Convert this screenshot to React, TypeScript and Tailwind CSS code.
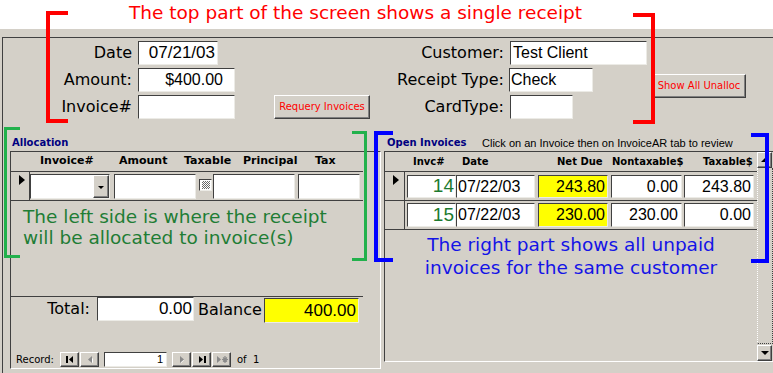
import React from "react";

const LABEL = "font-['DejaVu_Sans',sans-serif] text-[16px] leading-[20px] text-black whitespace-nowrap";
const VAL = "font-['Liberation_Sans',Arial,sans-serif] whitespace-nowrap";
const BOX =
  "flex items-center border border-t-[#404040] border-l-[#404040] border-r-[#ecebe6] border-b-[#ecebe6]";
const RAISED =
  "bg-[#d4d0c8] border border-t-white border-l-white border-r-[#404040] border-b-[#404040] shadow-[inset_-1px_-1px_0_#808080]";
const HEAD = "font-['DejaVu_Sans',sans-serif] font-bold whitespace-nowrap";
const NOTE = "font-['DejaVu_Sans',sans-serif] text-[18.5px] whitespace-nowrap";

function Bracket({ cls }: { cls: string }) {
  return <div className={`pointer-events-none absolute ${cls}`} />;
}

function RowArrow() {
  return <div className="h-0 w-0 border-y-[5px] border-l-[6px] border-y-transparent border-l-black" />;
}

function NavIcon({ kind }: { kind: "first" | "prev" | "next" | "last" | "new" }) {
  const on = "#000";
  const off = "#8a8a8a";
  return (
    <svg width="14" height="9" viewBox="0 0 14 9">
      {kind === "first" && (
        <>
          <rect x="3" y="1" width="2" height="7" fill={on} />
          <path d="M10 1 L6 4.5 L10 8 Z" fill={on} />
        </>
      )}
      {kind === "prev" && (
        <>
          <path d="M9 2 L6 4.5 L9 7 Z" fill="#fff" transform="translate(1 1)" />
          <path d="M9 1 L5 4.5 L9 8 Z" fill={off} />
        </>
      )}
      {kind === "next" && (
        <>
          <path d="M5 2 L8 4.5 L5 7 Z" fill="#fff" transform="translate(1 1)" />
          <path d="M5 1 L9 4.5 L5 8 Z" fill={off} />
        </>
      )}
      {kind === "last" && (
        <>
          <path d="M4 1 L8 4.5 L4 8 Z" fill={on} />
          <rect x="9" y="1" width="2" height="7" fill={on} />
        </>
      )}
      {kind === "new" && (
        <>
          <path d="M2 1 L6 4.5 L2 8 Z" fill={off} />
          <path d="M10 1 V8 M7 4.5 H13 M8 2.5 L12 6.5 M12 2.5 L8 6.5" stroke={off} strokeWidth="1.2" />
        </>
      )}
    </svg>
  );
}

function NavButton({ kind, cls = "" }: { kind: "first" | "prev" | "next" | "last" | "new"; cls?: string }) {
  return (
    <div className={`${RAISED} flex h-[15px] w-[19px] items-center justify-center ${cls}`}>
      <NavIcon kind={kind} />
    </div>
  );
}

function TopForm() {
  return (
    <div className="flex pt-[3px]">
      <div className="flex w-[367px] flex-col gap-[3px]">
        <div className="flex h-[24px] items-center">
          <span className={`${LABEL} w-[129px] text-right`}>Date</span>
          <div className={`${BOX} ${VAL} ml-[6px] h-[24px] w-[80px] justify-end bg-white pr-[2px] text-[17px] text-black`}>
            07/21/03
          </div>
        </div>
        <div className="flex h-[24px] items-center">
          <span className={`${LABEL} w-[129px] text-right`}>Amount:</span>
          <div className={`${BOX} ${VAL} ml-[6px] h-[24px] w-[97px] justify-end bg-white pr-[11px] text-[16px] text-black`}>
            $400.00
          </div>
        </div>
        <div className="flex h-[24px] items-center">
          <span className={`${LABEL} w-[129px] text-right`}>Invoice#</span>
          <div className={`${BOX} ml-[6px] h-[24px] w-[97px] bg-white`} />
          <button
            className={`${RAISED} ml-[39px] h-[24px] w-[96px] font-['DejaVu_Sans',sans-serif] text-[10px] leading-none text-[#ff0000]`}
          >
            Requery Invoices
          </button>
        </div>
      </div>
      <div className="flex flex-col gap-[3px]">
        <div className="flex h-[24px] items-center">
          <span className={`${LABEL} w-[134px] text-right`}>Customer:</span>
          <div className={`${BOX} ${VAL} ml-[6px] h-[24px] w-[137px] bg-white pl-[2px] text-[16px] text-black`}>
            Test Client
          </div>
        </div>
        <div className="flex h-[24px] items-start">
          <span className={`${LABEL} w-[134px] text-right leading-[24px]`}>Receipt Type:</span>
          <div className={`${BOX} ${VAL} ml-[5px] h-[24px] w-[84px] bg-white pl-[1px] text-[16px] text-black`}>Check</div>
          <button
            className={`${RAISED} ml-[59px] mt-[6px] h-[24px] w-[94px] font-['DejaVu_Sans',sans-serif] text-[10px] leading-none text-[#ff0000]`}
          >
            Show All Unalloc
          </button>
        </div>
        <div className="flex h-[24px] items-center">
          <span className={`${LABEL} w-[134px] text-right`}>CardType:</span>
          <div className={`${BOX} ml-[6px] h-[24px] w-[63px] bg-white`} />
        </div>
      </div>
    </div>
  );
}

function Allocation() {
  return (
    <div className="ml-[7px] flex w-[371px] flex-col">
      <div className="flex h-[32px] items-end pb-[2px] pl-[2px]">
        <span className={`${HEAD} text-[10px] leading-[12px] text-[#000080]`}>Allocation</span>
      </div>
      <div className="h-[218px] border border-t-[#404040] border-l-[#404040] border-r-white border-b-white">
        <div className="w-[352px]">
          <div className={`${HEAD} flex h-[20px] items-center border-b border-[#404040] text-[11px] text-black`}>
            <span className="ml-[29px] w-[79px]">Invoice#</span>
            <span className="w-[65px]">Amount</span>
            <span className="w-[59px]">Taxable</span>
            <span className="w-[72px]">Principal</span>
            <span>Tax</span>
          </div>
          <div className="flex h-[29px] items-start border-b border-[#404040]">
            <div className="h-full w-[19px] border-r border-[#404040] pl-[8px] pt-[3px]">
              <RowArrow />
            </div>
            <div className={`${BOX} mt-[2px] h-[25px] w-[80px] justify-end bg-white`}>
              <div className={`${RAISED} flex h-full w-[16px] items-center justify-center`}>
                <div className="mt-[2px] h-0 w-0 border-x-[3px] border-t-[3px] border-x-transparent border-t-black" />
              </div>
            </div>
            <div className={`${BOX} ml-[4px] mt-[2px] h-[25px] w-[82px] bg-white`} />
            <div className={`${BOX} ml-[3px] mt-[7px] h-[12px] w-[13px] justify-center bg-white`}>
              <div className="h-[8px] w-[8px] bg-[repeating-conic-gradient(#6b6b6b_0%_25%,#ffffff_0%_50%)] bg-[length:2px_2px]" />
            </div>
            <div className={`${BOX} ml-[1px] mt-[2px] h-[25px] w-[82px] bg-white`} />
            <div className={`${BOX} ml-[3px] mt-[2px] h-[25px] w-[62px] bg-white`} />
          </div>
          <div className={`${NOTE} h-[95px] pl-[12px] pt-[5px] leading-[21px] text-[#1f7d35]`}>
            <div>The left side is where the receipt</div>
            <div>will be allocated to invoice(s)</div>
          </div>
          <div className="flex h-[29px] items-start border-t border-[#404040]">
            <span className={`${LABEL} w-[79px] pt-[2px] text-right`}>Total:</span>
            <div className={`${BOX} ${VAL} ml-[7px] h-[24px] w-[97px] justify-end bg-white pr-[1px] text-[17px] text-black`}>
              0.00
            </div>
            <span className={`${LABEL} ml-[4px] w-[66px] pt-[3px]`}>Balance</span>
            <div
              className={`${BOX} ${VAL} mt-[1px] h-[25px] w-[95px] justify-end bg-[#ffff00] pr-[2px] text-[17px] text-black`}
            >
              400.00
            </div>
          </div>
          <div className="mt-[27px] flex h-[15px] items-center font-['DejaVu_Sans',sans-serif] text-[10px] text-black">
            <span className="ml-[5px] w-[44px]">Record:</span>
            <NavButton kind="first" />
            <NavButton kind="prev" cls="ml-[1px]" />
            <div className={`${BOX} ${VAL} ml-[5px] h-[15px] w-[63px] justify-end bg-white pr-[3px] text-[11px] text-black`}>
              1
            </div>
            <NavButton kind="next" cls="ml-[5px]" />
            <NavButton kind="last" cls="ml-[1px]" />
            <NavButton kind="new" cls="ml-[1px]" />
            <span className="ml-[6px]">of&nbsp;&nbsp;1</span>
          </div>
        </div>
      </div>
    </div>
  );
}

type Inv = { no: string; date: string; due: string; nontax: string; tax: string };
const INVOICES: Inv[] = [
  { no: "14", date: "07/22/03", due: "243.80", nontax: "0.00", tax: "243.80" },
  { no: "15", date: "07/22/03", due: "230.00", nontax: "230.00", tax: "0.00" },
];

function InvoiceRow({ inv, current }: { inv: Inv; current: boolean }) {
  const top = current ? "mt-[3px] h-[23px]" : "mt-[2px] h-[24px]";
  return (
    <div className="flex h-[29px] items-start border-b border-[#404040]">
      <div className="h-full w-[20px] border-r border-[#404040] pl-[8px] pt-[3px]">{current && <RowArrow />}</div>
      <div className={`${BOX} ${VAL} ${top} ml-[2px] w-[49px] justify-end bg-white pr-[1px] text-[19px] text-[#1d7a2f]`}>
        {inv.no}
      </div>
      <div className={`${BOX} ${VAL} ${top} w-[79px] bg-white pl-[1px] text-[16px] text-black`}>{inv.date}</div>
      <div className={`${BOX} ${VAL} ${top} ml-[3px] w-[70px] justify-end bg-[#ffff00] pr-[2px] text-[16px] text-black`}>
        {inv.due}
      </div>
      <div className={`${BOX} ${VAL} ${top} ml-[3px] w-[71px] justify-end bg-white pr-[3px] text-[16px] text-black`}>
        {inv.nontax}
      </div>
      <div className={`${BOX} ${VAL} ${top} ml-[2px] w-[70px] justify-end bg-white pr-[2px] text-[16px] text-black`}>
        {inv.tax}
      </div>
    </div>
  );
}

function OpenInvoices() {
  return (
    <div className="ml-[3px] flex w-[389px] flex-col">
      <div className="flex h-[32px] items-end pb-[2px] pl-[3px]">
        <span className={`${HEAD} w-[95px] text-[10px] leading-[12px] text-[#000080]`}>Open Invoices</span>
        <span className="font-['Liberation_Sans',Arial,sans-serif] text-[11px] leading-[12px] text-black">
          Click on an Invoice then on InvoiceAR tab to review
        </span>
      </div>
      <div className="flex h-[211px] border-b border-l border-t border-b-white border-l-[#404040] border-t-[#404040]">
        <div className="w-[372px]">
          <div className={`${HEAD} flex h-[20px] items-center border-b border-[#404040] text-[10px] text-black`}>
            <span className="ml-[28px] w-[49px]">Invc#</span>
            <span className="w-[95px]">Date</span>
            <span className="w-[55px]">Net Due</span>
            <span className="w-[91px]">Nontaxable$</span>
            <span>Taxable$</span>
          </div>
          {INVOICES.map((inv, i) => (
            <InvoiceRow key={inv.no} inv={inv} current={i === 0} />
          ))}
          <div className={`${NOTE} pt-[3px] text-center leading-[23px] text-[#1414e6]`}>
            <div>The right part shows all unpaid</div>
            <div>invoices for the same customer</div>
          </div>
        </div>
        <div className="flex w-[16px] flex-col">
          <div className={`${RAISED} flex h-[16px] w-[15px] items-center justify-center`}>
            <div className="h-0 w-0 border-x-[4px] border-b-[4px] border-x-transparent border-b-black" />
          </div>
          <div className="flex-1 border-b border-l border-r border-dotted border-b-[#404040] border-l-white border-r-[#404040]" />
          <div className={`${RAISED} mt-[1px] flex h-[16px] w-[15px] items-center justify-center`}>
            <div className="h-0 w-0 border-x-[4px] border-t-[4px] border-x-transparent border-t-black" />
          </div>
        </div>
      </div>
    </div>
  );
}

export default function App() {
  return (
    <div className="relative h-[373px] w-[773px] overflow-hidden bg-white font-['DejaVu_Sans',sans-serif]">
      <div className={`${NOTE} h-[29px] pl-[129px] pt-[2px] leading-[22px] text-[#ff0000]`}>
        The top part of the screen shows a single receipt
      </div>
      <div className="h-[344px] bg-[#d4d0c8] pl-[2px] pt-[8px]">
        <div className="h-[336px] border-l border-t border-[#404040]">
          <TopForm />
          <div className="flex">
            <Allocation />
            <OpenInvoices />
          </div>
        </div>
      </div>

      {/* annotation brackets */}
      <Bracket cls="left-[46px] top-[11px] h-[112px] w-[22px] border-y-4 border-l-4 border-[#ff0000]" />
      <Bracket cls="left-[633px] top-[13px] h-[111px] w-[22px] border-y-4 border-r-4 border-[#ff0000]" />
      <Bracket cls="left-[4px] top-[127px] h-[131px] w-[16px] border-y-[3px] border-l-[3px] border-[#22b14c]" />
      <Bracket cls="left-[352px] top-[131px] h-[130px] w-[15px] border-y-[3px] border-r-[3px] border-[#22b14c]" />
      <Bracket cls="left-[374px] top-[131px] h-[131px] w-[19px] border-y-4 border-l-4 border-[#0000ff]" />
      <Bracket cls="left-[751px] top-[133px] h-[130px] w-[18px] border-y-4 border-r-4 border-[#0000ff]" />
    </div>
  );
}
